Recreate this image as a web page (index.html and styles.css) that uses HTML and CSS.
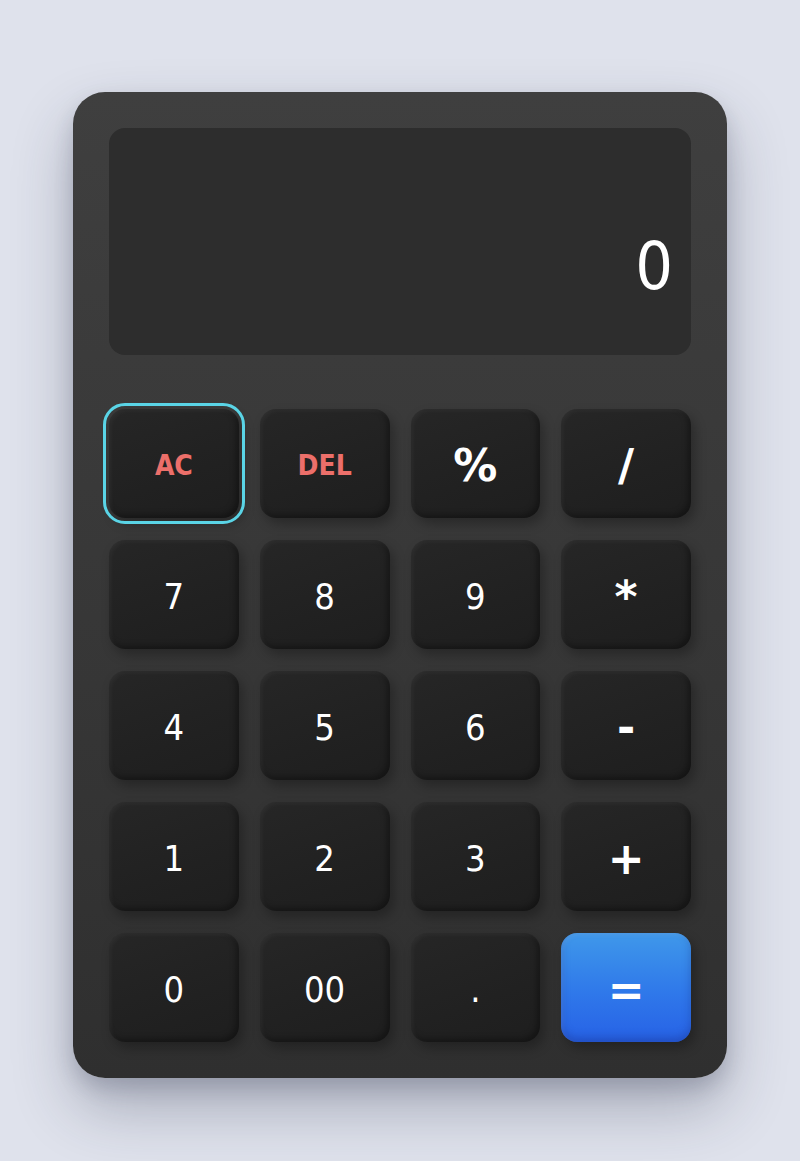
FILE: index.html
```html
<!doctype html>
<html lang="en">
<head>
    <meta charset="UTF-8">
    <title>Calculator</title>
    <link rel="stylesheet" href="styles.css">
</head>
<body>
    <div class="calculator">
        <div class="display" id="display">0</div>

        <div class="keys">
            <button class="key key-clear key-focus">AC</button>
            <button class="key key-clear">DEL</button>
            <button class="key key-op">%</button>
            <button class="key key-op">/</button>

            <button class="key">7</button>
            <button class="key">8</button>
            <button class="key">9</button>
            <button class="key key-op">*</button>

            <button class="key">4</button>
            <button class="key">5</button>
            <button class="key">6</button>
            <button class="key key-op">-</button>

            <button class="key">1</button>
            <button class="key">2</button>
            <button class="key">3</button>
            <button class="key key-op">+</button>

            <button class="key">0</button>
            <button class="key">00</button>
            <button class="key">.</button>
            <button class="key key-op key-equal">=</button>
        </div>
    </div>
</body>
</html>
```

FILE: styles.css
```css
html {
    background-color: #dfe2ec;
}
body {
    margin: 0;
    min-height: 1161px;
    padding-top: 92px;
    box-sizing: border-box;
    font-family: 'DejaVu Sans Condensed', 'DejaVu Sans', sans-serif;
}
.calculator {
    width: 654px;
    height: 986px;
    box-sizing: border-box;
    margin: 0 auto;
    padding: 36px;
    border-radius: 32px;
    background: linear-gradient(180deg, #3f3f3f 0%, #363636 60%, #2f2f2f 100%);
    box-shadow: 0 30px 60px rgba(40, 45, 70, 0.3), 0 10px 20px rgba(40, 45, 70, 0.18);
}
.display {
    height: 227px;
    box-sizing: border-box;
    padding: 0 18px 50px;
    border-radius: 16px;
    background-color: #2d2d2d;
    color: #ffffff;
    font-size: 66px;
    display: flex;
    align-items: flex-end;
    justify-content: flex-end;
}
.keys {
    margin-top: 54px;
    display: grid;
    grid-template-columns: repeat(4, 1fr);
    grid-auto-rows: 109px;
    column-gap: 21px;
    row-gap: 22px;
}
.key {
    border: none;
    border-radius: 16px;
    background: linear-gradient(160deg, #262626 0%, #212121 60%, #1e1e1e 100%);
    box-shadow: inset 2px 2px 4px rgba(255, 255, 255, 0.05),
                inset -3px -3px 6px rgba(0, 0, 0, 0.35),
                4px 6px 12px rgba(0, 0, 0, 0.28);
    color: #ffffff;
    font-family: 'DejaVu Sans Condensed', 'DejaVu Sans', sans-serif;
    font-size: 36px;
    padding: 4px 0 0;
    cursor: pointer;
}
.key-op {
    font-family: 'DejaVu Sans', sans-serif;
    font-size: 44px;
    font-weight: bold;
}
.key-clear {
    color: #ec6f6a;
    font-size: 28px;
    font-weight: bold;
}
.key-focus {
    outline: 3px solid #5ad4e6;
    outline-offset: 3px;
}
.key-equal {
    background: linear-gradient(180deg, #3f98ea 0%, #2f78ea 55%, #2762e6 100%);
    box-shadow: inset 0 -4px 8px rgba(20, 40, 120, 0.35),
                inset 2px 2px 4px rgba(255, 255, 255, 0.1),
                4px 6px 12px rgba(0, 0, 0, 0.28);
}
```
